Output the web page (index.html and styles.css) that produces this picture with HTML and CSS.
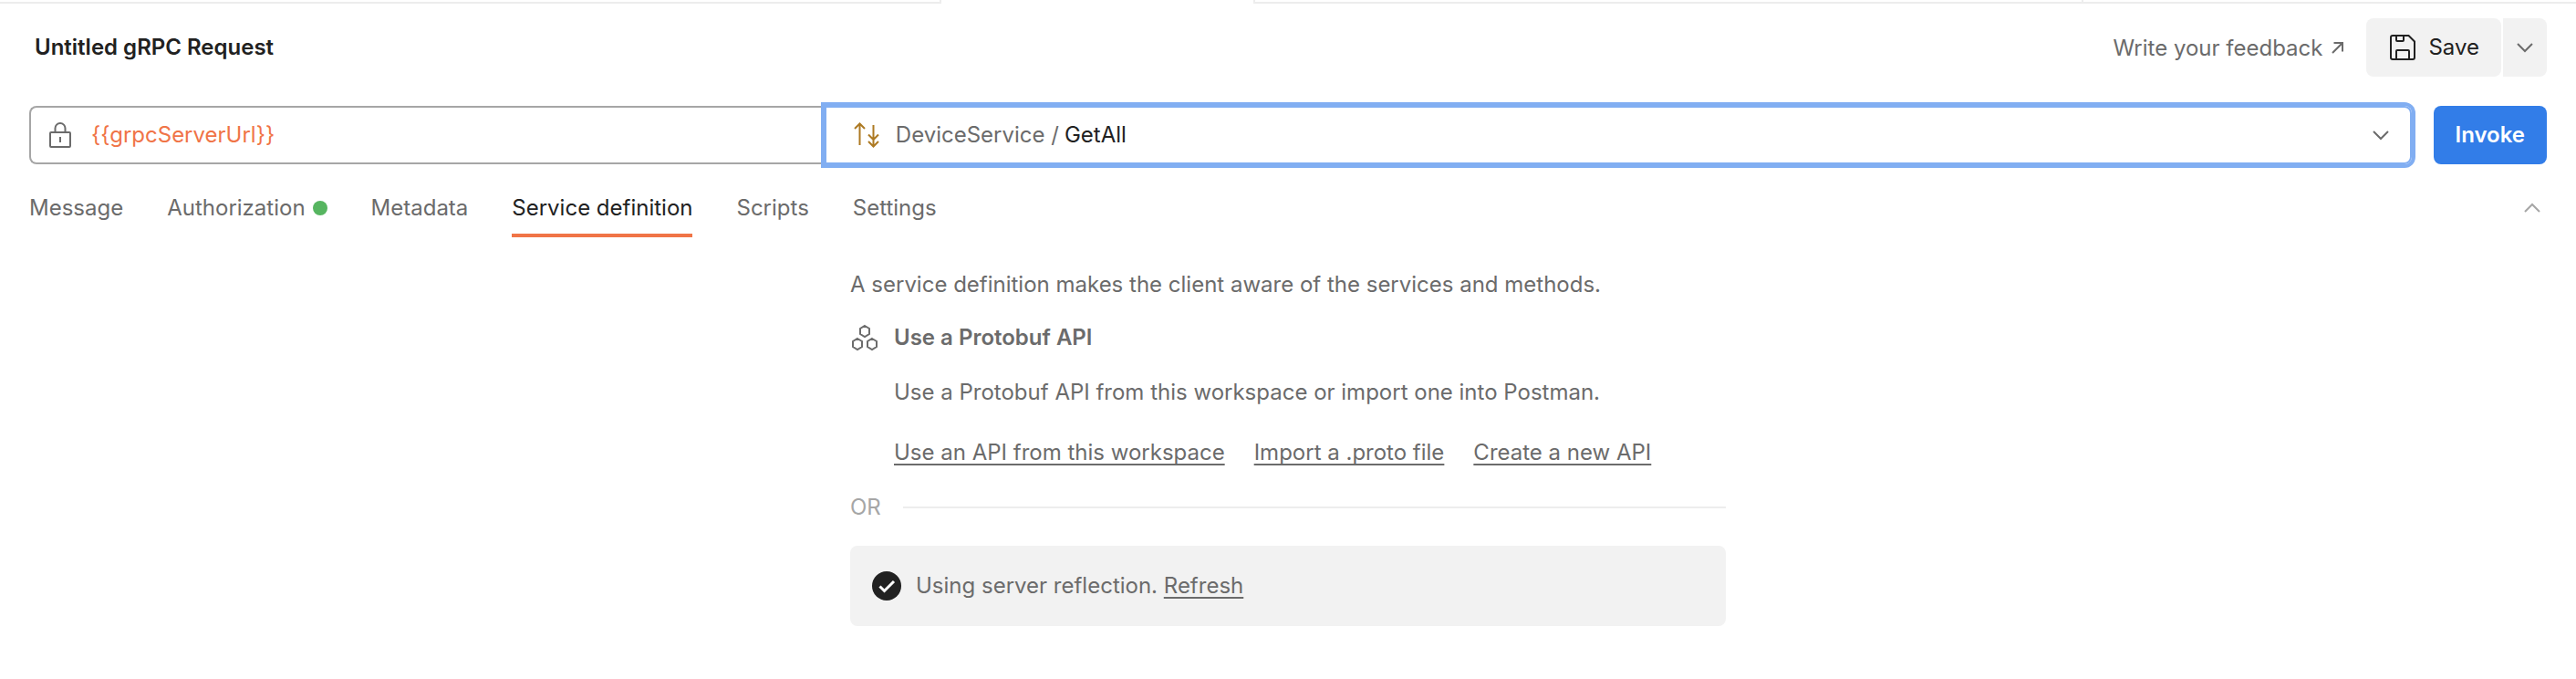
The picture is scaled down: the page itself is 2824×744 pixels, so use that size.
FILE: index.html
```html
<!DOCTYPE html>
<html lang="en">
<head>
<meta charset="utf-8">
<title>Untitled gRPC Request</title>
<link rel="stylesheet" href="styles.css">
</head>
<body>
<div class="tab-strip" aria-hidden="true">
  <span class="strip-left"></span>
  <span class="strip-active"></span>
  <span class="strip-right"></span>
  <span class="strip-rest"></span>
</div>

<header class="request-header">
  <h1 class="request-title">Untitled gRPC Request</h1>
  <a class="feedback" href="#feedback">Write your feedback
    <svg class="icon-arrow" viewBox="0 0 16 16" aria-hidden="true"><path d="M3 13 14 2M4.500 2H14v9.500"/></svg>
  </a>
  <div class="save-group">
    <button class="save" type="button">
      <svg class="icon" viewBox="0 0 32 32" aria-hidden="true"><path d="M5 3h17.500L29 9.500V27a2 2 0 0 1-2 2H5a2 2 0 0 1-2-2V5a2 2 0 0 1 2-2ZM9 3v5a1 1 0 0 0 1 1h6a1 1 0 0 0 1-1V3M9 29V20a1 1 0 0 1 1-1h12a1 1 0 0 1 1 1v9"/></svg>
      Save
    </button>
    <button class="save-more" type="button" aria-label="More save options">
      <svg class="icon-chevron" viewBox="0 0 24 24" aria-hidden="true"><path d="m4 8 8 8 8-8"/></svg>
    </button>
  </div>
</header>

<form class="request-bar">
  <div class="address">
    <div class="url-box">
      <svg class="icon" viewBox="0 0 32 32" aria-hidden="true"><rect x="5" y="13" width="22" height="16" rx="1"/><path d="M10.500 13V8.500a5.500 5.500 0 0 1 11 0V13M16 18v6"/></svg>
      <input class="url-input" type="text" aria-label="Server URL" value="{{grpcServerUrl}}">
    </div>
    <div class="method-box">
      <svg class="icon icon-stream" viewBox="0 0 32 32" aria-hidden="true"><path d="M8.500 27V3.500M3 9l5.500-5.500L14 9M23.500 5v23.500M18 15.500l5.500 5.500 5.500-5.500M18 23l5.500 5.500L29 23"/></svg>
      <div class="method-field">
        <label class="service-name" for="method">DeviceService /</label>
        <select class="method" id="method"><option>GetAll</option></select>
      </div>
      <svg class="icon-chevron" viewBox="0 0 24 24" aria-hidden="true"><path d="m4 8 8 8 8-8"/></svg>
    </div>
  </div>
  <button class="invoke" type="button">Invoke</button>
</form>

<nav class="tabs" aria-label="Request sections">
  <a class="tab" href="#message">Message</a>
  <a class="tab" href="#authorization">Authorization<span class="dot"></span></a>
  <a class="tab" href="#metadata">Metadata</a>
  <a class="tab tab-current" href="#definition" aria-current="page">Service definition</a>
  <a class="tab" href="#scripts">Scripts</a>
  <a class="tab" href="#settings">Settings</a>
  <button class="collapse" type="button" aria-label="Collapse">
    <svg class="icon-chevron" viewBox="0 0 24 24" aria-hidden="true"><path d="m4 16 8-8 8 8"/></svg>
  </button>
</nav>

<main class="definition" id="definition">
  <p class="intro">A service definition makes the client aware of the services and methods.</p>
  <section class="api">
    <svg class="icon icon-hex" viewBox="0 0 32 32" aria-hidden="true"><path d="m16 3 5 3v6l-5 3-5-3V6ZM8 17l5 3v6l-5 3-5-3v-6ZM24 17l5 3v6l-5 3-5-3v-6Z"/></svg>
    <div class="api-body">
      <h2 class="api-title">Use a Protobuf API</h2>
      <p class="api-text">Use a Protobuf API from this workspace or import one into Postman.</p>
      <div class="api-links">
        <a class="link" href="#workspace">Use an API from this workspace</a>
        <a class="link" href="#import">Import a .proto file</a>
        <a class="link" href="#create">Create a new API</a>
      </div>
    </div>
  </section>
  <div class="divider">OR</div>
  <div class="reflection">
    <svg class="icon-check" viewBox="0 0 32 32" aria-hidden="true"><circle cx="16" cy="16" r="16"/><path d="m8.500 16.500 5 5L24 11"/></svg>
    <p>Using server reflection. <a class="link" href="#refresh">Refresh</a></p>
  </div>
</main>
</body>
</html>
```

FILE: styles.css
```css
* {
  box-sizing: border-box;
}

body {
  margin: 0;
  background: #fff;
  color: #6b6b6b;
  font: 400 24px/40px Inter, "Liberation Sans", sans-serif;
}

h1,
h2,
p {
  margin: 0;
  font-size: 24px;
}

a {
  color: inherit;
  text-decoration: none;
}

button,
input,
select {
  margin: 0;
  padding: 0;
  border: 0;
  background: none;
  color: inherit;
  font: inherit;
}

svg {
  flex: none;
  fill: none;
  stroke: currentColor;
  stroke-width: 2;
}

.icon {
  width: 32px;
  height: 32px;
}

.icon-chevron {
  width: 24px;
  height: 24px;
}

/* Lower edge of the open-request tabs */
.tab-strip {
  display: flex;
  height: 4px;
}

.strip-left,
.strip-right,
.strip-rest {
  border-bottom: 2px solid #ededed;
}

.strip-left {
  width: 1032px;
  border-right: 2px solid #ededed;
}

.strip-active {
  width: 342px;
}

.strip-right {
  width: 910px;
  border-left: 2px solid #ededed;
  border-right: 2px solid #ededed;
}

.strip-rest {
  flex: 1;
}

.request-header {
  display: flex;
  align-items: center;
  padding: 16px 32px 0 38px;
}

.request-title {
  flex: 1;
  color: #212121;
  font-weight: 600;
}

.feedback {
  display: flex;
  align-items: center;
  gap: 8px;
  margin-right: 24px;
  padding-top: 2px;
}

.icon-arrow {
  width: 16px;
  height: 16px;
}

.save-group {
  display: flex;
  gap: 2px;
}

.save,
.save-more {
  display: flex;
  align-items: center;
  justify-content: center;
  height: 64px;
  border-radius: 8px;
  background: #f2f2f2;
}

.save {
  gap: 12px;
  padding: 0 24px;
  color: #212121;
}

.save-more {
  width: 48px;
  border-radius: 0 8px 8px 0;
}

.request-bar {
  display: flex;
  gap: 24px;
  padding: 32px 32px 0;
}

/* The gap is filled by the focus ring of the method box */
.address {
  flex: 1;
  display: grid;
  grid-template-columns: minmax(0, 1fr) minmax(0, 2fr);
  column-gap: 2px;
}

.url-box,
.method-box {
  display: flex;
  align-items: center;
  gap: 16px;
  height: 64px;
}

.url-box {
  padding-left: 16px;
  border: 2px solid #a6a6a6;
  border-right: 0;
  border-radius: 8px 0 0 8px;
}

.url-input {
  flex: 1;
  height: 40px;
  padding-left: 2px;
  color: #f07447;
  outline: 0;
}

.method-box {
  padding: 0 20px 0 28px;
  border: 2px solid #81aef2;
  border-radius: 0 8px 8px 0;
  box-shadow: 0 0 0 4px #81aef2;
}

.icon-stream {
  color: #ad7a23;
}

.method-field {
  flex: 1;
  display: flex;
  gap: 6px;
}

.method {
  flex: 1;
  appearance: none;
  color: #212121;
  outline: 0;
}

.invoke {
  padding: 0 24px;
  border-radius: 8px;
  background: #327de8;
  color: #fff;
  font-weight: 600;
}

.tabs {
  display: flex;
  gap: 48px;
  padding: 28px 32px 0;
}

.tab {
  display: flex;
  align-items: center;
  gap: 8px;
  padding-bottom: 8px;
  border-bottom: 4px solid transparent;
}

.tab-current {
  border-color: #f07447;
  color: #212121;
}

.dot {
  width: 16px;
  height: 16px;
  border-radius: 50%;
  background: #56b560;
}

.collapse {
  display: flex;
  align-items: center;
  height: 40px;
  margin-left: auto;
  padding: 0 4px;
  color: #a6a6a6;
}

.definition {
  max-width: 960px;
  margin: 0 auto;
  padding: 32px 0;
}

.api {
  display: flex;
  gap: 16px;
  margin-top: 18px;
}

.icon-hex {
  margin-top: 4px;
}

.api-title {
  font-weight: 600;
}

.api-text {
  margin-top: 20px;
}

.api-links {
  display: flex;
  gap: 32px;
  margin-top: 26px;
}

.link {
  text-decoration: underline 2px;
  text-decoration-skip-ink: none;
  text-underline-offset: 4px;
}

.divider {
  display: flex;
  align-items: center;
  gap: 24px;
  margin-top: 20px;
  color: #a6a6a6;
}

.divider::after {
  content: "";
  flex: 1;
  border-top: 2px solid #ededed;
}

.reflection {
  display: flex;
  align-items: center;
  gap: 16px;
  margin-top: 22px;
  padding: 24px;
  border-radius: 8px;
  background: #f2f2f2;
}

.icon-check {
  width: 32px;
  height: 32px;
  stroke: #fff;
  stroke-width: 3;
}

.icon-check circle {
  fill: #212121;
  stroke: none;
}
```
